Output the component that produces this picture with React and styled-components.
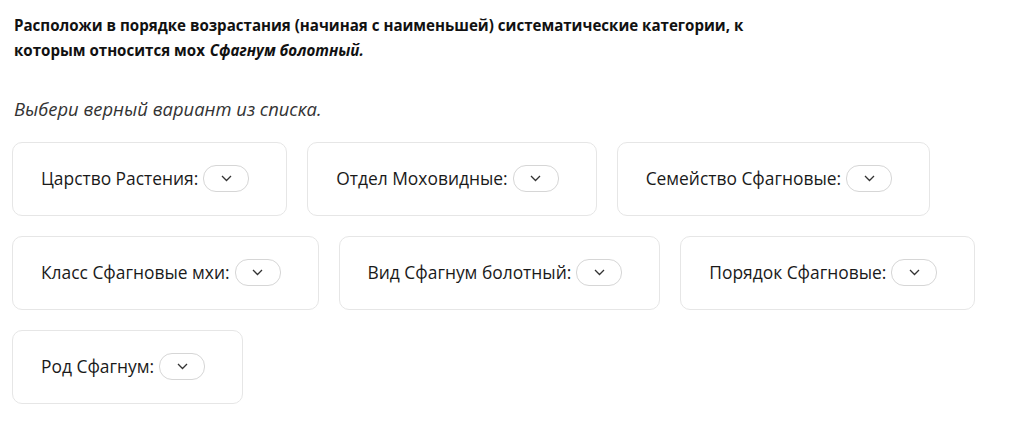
import React from 'react';
import styled, { createGlobalStyle } from 'styled-components';

const GlobalStyle = createGlobalStyle`
    body {
        margin: 0;
        background: #fff;
        font-family: 'Open Sans', 'Noto Sans', sans-serif;
        color: #1a1a1a;
    }
`;

const Page = styled.div`
    padding: 13px 14px 0 14px;
    width: 1000px;
`;

const Question = styled.p`
    margin: 0;
    font-size: 15.1px;
    font-weight: 700;
    line-height: 25px;
    color: #111;
    width: 760px;

    i {
        padding-left: 1px;
    }
`;

const Hint = styled.p`
    margin: 33px 0 0;
    font-size: 18.4px;
    font-style: italic;
    line-height: 26px;
    color: #333;
`;

const Options = styled.div`
    display: flex;
    flex-wrap: wrap;
    gap: 20px 20px;
    margin: 20px 0 0 -2px;
    width: 990px;
`;

const Card = styled.div`
    display: flex;
    align-items: center;
    gap: 5px;
    height: 74px;
    box-sizing: border-box;
    padding: 0 37px 3px 28px;
    border: 1px solid #e6e6e6;
    border-radius: 10px;
    font-size: 17.4px;
    color: #1a1a1a;
`;

const Select = styled.button`
    display: flex;
    align-items: center;
    justify-content: center;
    width: 46px;
    height: 27px;
    margin-top: 1px;
    padding: 0;
    border: 1px solid #d6d6d6;
    border-radius: 13px;
    background: #fff;
    color: #333;
`;

const Chevron = () => (
    <svg width="11" height="7" viewBox="0 0 11 7" fill="none">
        <path d="M1 1l4.5 4.5L10 1" stroke="#333" strokeWidth="1.3" />
    </svg>
);

const options = [
    'Царство Растения:',
    'Отдел Моховидные:',
    'Семейство Сфагновые:',
    'Класс Сфагновые мхи:',
    'Вид Сфагнум болотный:',
    'Порядок Сфагновые:',
    'Род Сфагнум:',
];

export default function App() {
    return (
        <Page>
            <GlobalStyle />
            <Question>
                Расположи в порядке возрастания (начиная с наименьшей) систематические категории, к
                которым относится мох <i>Сфагнум болотный.</i>
            </Question>
            <Hint>Выбери верный вариант из списка.</Hint>
            <Options>
                {options.map((label) => (
                    <Card key={label}>
                        {label}
                        <Select>
                            <Chevron />
                        </Select>
                    </Card>
                ))}
            </Options>
        </Page>
    );
}
